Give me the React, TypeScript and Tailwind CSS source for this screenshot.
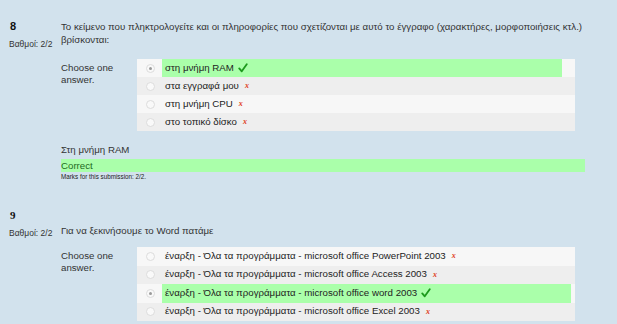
import React from "react";

const Radio = ({ checked }: { checked?: boolean }) => (
  <span className="flex h-[9px] w-[9px] items-center justify-center rounded-full border border-[#dcdcdc] bg-[#f9f9f9]">
    {checked && <span className="h-[3px] w-[3px] rounded-full bg-[#9a9a9a]" />}
  </span>
);

const Check = () => (
  <svg width="10" height="10" viewBox="0 0 12 12" className="ml-[4px] inline-block">
    <path d="M1.5 6.5 L4.5 10 L10.5 1.5" fill="none" stroke="#1d9a1d" strokeWidth="2.2" strokeLinecap="round" strokeLinejoin="round" />
  </svg>
);

const Cross = () => (
  <span className="ml-[6px] text-[8px] italic font-bold text-[#e0401a]" style={{ fontFamily: '"Liberation Serif", serif' }}>
    x
  </span>
);

type Opt = { text: string; correct?: boolean };

const Answers = ({ opts, greenW, rowH }: { opts: Opt[]; greenW: string; rowH: string }) => (
  <div className="flex">
    <div className="w-[76px] pt-[3px] text-[9.7px] leading-[12px] text-[#333]">
      Choose one
      <br />
      answer.
    </div>
    <div className="w-[438px] bg-[#f6f6f6]">
      {opts.map((o, i) => (
        <div key={i} className={`flex items-center ${rowH} ${i % 2 === 1 ? "bg-[#eeeeee]" : "bg-[#f7f7f7]"}`}>
          <div className="flex w-[25px] justify-center pl-[1px]">
            <Radio checked={o.correct} />
          </div>
          <div className={`flex h-full items-center pl-[3px] text-[9.7px] text-[#222] ${greenW} ${o.correct ? "bg-[#aaffaa]" : ""}`}>
            <span>{o.text}</span>
            {o.correct ? <Check /> : <Cross />}
          </div>
        </div>
      ))}
    </div>
  </div>
);

export default function App() {
  return (
    <div
      className="h-[324px] w-[617px] overflow-hidden bg-[#d2e2ed] text-[#333]"
      style={{ fontFamily: '"Liberation Sans", Arial, sans-serif' }}
    >
      {/* Question 8 */}
      <div className="flex pt-[20px]">
        <div className="w-[61px] pl-[9px]">
          <div className="pl-[1px] text-[11px] font-bold leading-[13px] text-[#111]">8</div>
          <div className="mt-[6px] text-[8.5px] leading-[10px] text-[#333]">Βαθμοί: 2/2</div>
        </div>
        <div className="flex-1">
          <div className="whitespace-nowrap text-[9.7px] leading-[13px] text-[#333]">
            Το κείμενο που πληκτρολογείτε και οι πληροφορίες που σχετίζονται με αυτό το έγγραφο (χαρακτήρες, μορφοποιήσεις κτλ.)
            <br />
            βρίσκονται:
          </div>
          <div className="mt-[13px]">
            <Answers
              greenW="w-[400px]"
              rowH="h-[18px]"
              opts={[
                { text: "στη μνήμη RAM", correct: true },
                { text: "στα εγγραφά μου" },
                { text: "στη μνήμη CPU" },
                { text: "στο τοπικό δίσκο" },
              ]}
            />
          </div>
          <div className="mt-[12px] text-[9.7px] leading-[13px] text-[#333]">Στη μνήμη RAM</div>
          <div className="mt-[3px] mr-[32px] h-[13px] bg-[#aaffaa] text-[9.7px] leading-[13px] text-[#1e6b1e]">Correct</div>
          <div className="text-[6.3px] leading-[9px] text-[#222]">Marks for this submission: 2/2.</div>
        </div>
      </div>

      {/* Question 9 */}
      <div className="mt-[28px] flex">
        <div className="w-[61px] pl-[9px]">
          <div className="pl-[1px] text-[11px] font-bold leading-[13px] text-[#111]" style={{ fontFamily: '"Liberation Serif", serif' }}>
            9
          </div>
          <div className="mt-[6px] text-[8.5px] leading-[10px] text-[#333]">Βαθμοί: 2/2</div>
        </div>
        <div className="flex-1">
          <div className="mt-[15px] text-[9.7px] leading-[13px] text-[#333]">Για να ξεκινήσουμε το Word πατάμε</div>
          <div className="mt-[10px]">
            <Answers
              greenW="w-[409px]"
              rowH="h-[18.5px]"
              opts={[
                { text: "έναρξη - Όλα τα προγράμματα - microsoft office PowerPoint 2003" },
                { text: "έναρξη - Όλα τα προγράμματα - microsoft office Access 2003" },
                { text: "έναρξη - Όλα τα προγράμματα - microsoft office word 2003", correct: true },
                { text: "έναρξη - Όλα τα προγράμματα - microsoft office Excel 2003" },
              ]}
            />
          </div>
        </div>
      </div>
    </div>
  );
}
